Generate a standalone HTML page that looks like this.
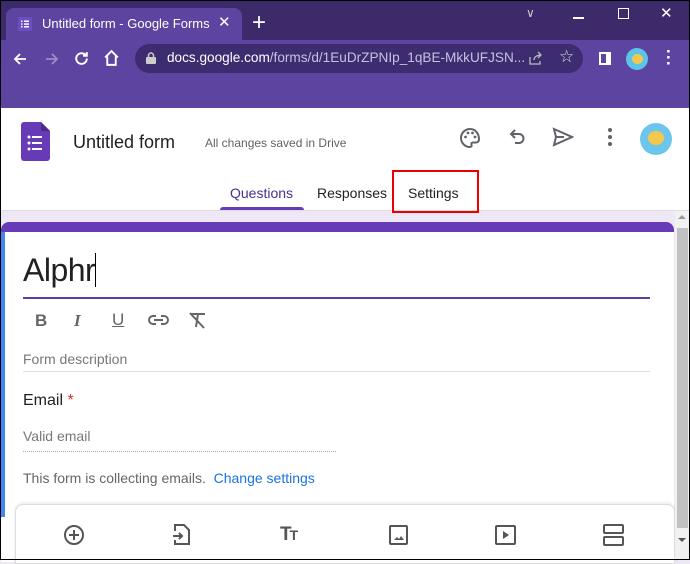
<!DOCTYPE html>
<html><head><meta charset="utf-8"><style>
*{margin:0;padding:0;box-sizing:border-box}
body{width:690px;height:560px;overflow:hidden;position:relative;font-family:"Liberation Sans",Arial,sans-serif;background:#ede7f6}
.abs{position:absolute}
svg{position:absolute}
</style></head><body>
<div class="abs" style="left:0;top:0;width:690px;height:40px;background:#3c2a6b"></div>
<div class="abs" style="left:6px;top:8px;width:236px;height:36px;background:#5c44a0;border-radius:8px 8px 0 0"></div>
<div class="abs" style="left:0;top:40px;width:690px;height:68px;background:#5c44a0"></div>
<svg style="left:18px;top:17px" width="14" height="14" viewBox="0 0 14 14"><rect width="14" height="14" fill="#6b4fc0"/><g fill="#fff"><rect x="3" y="3.5" width="1.5" height="1.5"/><rect x="6" y="3.5" width="5" height="1.5"/><rect x="3" y="6.3" width="1.5" height="1.5"/><rect x="6" y="6.3" width="5" height="1.5"/><rect x="3" y="9" width="1.5" height="1.5"/><rect x="6" y="9" width="5" height="1.5"/></g></svg>
<div class="abs" style="left:42px;top:16px;font-size:13px;color:#fff">Untitled form - Google Forms</div>
<div class="abs" style="left:218px;top:13px;font-size:15px;color:#fff">✕</div>
<div class="abs" style="left:252px;top:9px;font-size:24px;color:#fff;font-weight:300">+</div>
<div class="abs" style="left:526px;top:6px;font-size:12px;color:#ccc">∨</div>
<div class="abs" style="left:573px;top:17px;width:11px;height:1.5px;background:#fff"></div>
<div class="abs" style="left:618px;top:8px;width:11px;height:11px;border:1.5px solid #fff"></div>
<div class="abs" style="left:660px;top:4px;font-size:15px;color:#fff">✕</div>
<svg style="left:12px;top:51px" width="16" height="16" viewBox="0 0 16 16" fill="none" stroke="#fff" stroke-width="1.8"><path d="M14 8H3M8 3L3 8l5 5"/></svg>
<svg style="left:44px;top:51px" width="16" height="16" viewBox="0 0 16 16" fill="none" stroke="#9c8cc8" stroke-width="1.8"><path d="M2 8h11M8 3l5 5-5 5"/></svg>
<svg style="left:73px;top:50px" width="17" height="17" viewBox="0 0 16 16" fill="none" stroke="#fff" stroke-width="1.8"><path d="M13 8a5 5 0 1 1-1.5-3.5"/><path d="M13 2v3.5H9.5" fill="#fff"/></svg>
<svg style="left:103px;top:49px" width="17" height="18" viewBox="0 0 16 17" fill="none" stroke="#fff" stroke-width="1.8"><path d="M2 8l6-6 6 6M4 7v8h8V7"/></svg>
<div class="abs" style="left:135px;top:44px;width:448px;height:29px;background:#3d2c70;border-radius:15px"></div>
<svg style="left:146px;top:52px" width="10" height="12" viewBox="0 0 10 12"><rect x="0" y="5" width="10" height="7" rx="1" fill="#ccc"/><path d="M2.5 5V3.5a2.5 2.5 0 0 1 5 0V5" stroke="#ccc" stroke-width="1.5" fill="none"/></svg>
<div class="abs" style="left:167px;top:50px;font-size:13.6px;color:#fff;white-space:nowrap">docs.google.com<span style="color:#c8c0e0">/forms/d/1EuDrZPNIp_1qBE-MkkUFJSN...</span></div>
<svg style="left:528px;top:51px" width="15" height="15" viewBox="0 0 15 15" fill="none" stroke="#bbb" stroke-width="1.3"><path d="M2 6v7h10v-3M6 9c0-3 3-5 7-5M10 1l3 3-3 3"/></svg>
<div class="abs" style="left:559px;top:47px;font-size:17px;color:#ddd">☆</div>
<div class="abs" style="left:599px;top:52px;width:12px;height:13px;border:2px solid #fff;border-right-width:5px"></div>
<div class="abs" style="left:626px;top:48px;width:22px;height:22px;border-radius:50%;background:#5bc4e8"><div style="margin:6px;width:11px;height:10px;border-radius:50%;background:#f2c94c"></div></div>
<div class="abs" style="left:666px;top:49px;font-size:17px;color:#fff;font-weight:bold;line-height:6px">·<br>·<br>·</div>
<div class="abs" style="left:0;top:108px;width:690px;height:103px;background:#fff;border-bottom:1px solid #ddd"></div>
<svg style="left:21px;top:122px" width="29" height="39" viewBox="0 0 29 39"><path d="M3 0h17l9 9v27a3 3 0 0 1-3 3H3a3 3 0 0 1-3-3V3a3 3 0 0 1 3-3z" fill="#673ab7"/><path d="M20 0v9h9z" fill="#4a2a8a"/><g fill="#fff"><circle cx="8" cy="15" r="1.5"/><circle cx="8" cy="21" r="1.5"/><circle cx="8" cy="27" r="1.5"/><rect x="11" y="14" width="10" height="2"/><rect x="11" y="20" width="10" height="2"/><rect x="11" y="26" width="10" height="2"/></g></svg>
<div class="abs" style="left:73px;top:132px;font-size:18px;color:#202124">Untitled form</div>
<div class="abs" style="left:205px;top:136px;font-size:12px;color:#5f6368">All changes saved in Drive</div>
<svg style="left:459px;top:127px" width="22" height="22" viewBox="0 0 22 22" fill="none" stroke="#5f6368" stroke-width="2"><path d="M11 2a9 9 0 0 0 0 18c1.5 0 2-1 1.5-2s0-2.5 1.5-2.5H17a3 3 0 0 0 3-3C20 6 16 2 11 2z"/><g fill="#5f6368" stroke="none"><circle cx="6.5" cy="10" r="1.4"/><circle cx="9" cy="6" r="1.4"/><circle cx="13.5" cy="6" r="1.4"/><circle cx="16" cy="10" r="1.4"/></g></svg>
<svg style="left:507px;top:128px" width="20" height="20" viewBox="0 0 20 20" fill="none" stroke="#5f6368" stroke-width="2"><path d="M5 6h7a4.5 4.5 0 0 1 0 9H8M8 2L4 6l4 4"/></svg>
<svg style="left:552px;top:127px" width="22" height="20" viewBox="0 0 22 20" fill="none" stroke="#5f6368" stroke-width="2"><path d="M2 2l18 8-18 8 2-8zM4 10h8"/></svg>
<div class="abs" style="left:608px;top:128px"><div style="width:4px;height:4px;border-radius:50%;background:#5f6368;margin-bottom:3px"></div><div style="width:4px;height:4px;border-radius:50%;background:#5f6368;margin-bottom:3px"></div><div style="width:4px;height:4px;border-radius:50%;background:#5f6368"></div></div>
<div class="abs" style="left:640px;top:123px;width:32px;height:32px;border-radius:50%;background:#6cc6ec"><div style="margin:8px 8px;width:16px;height:14px;border-radius:50%;background:#f2c94c"></div></div>
<div class="abs" style="left:230px;top:185px;font-size:14px;color:#4a2f8f">Questions</div>
<div class="abs" style="left:220px;top:207px;width:84px;height:3px;background:#673ab7;border-radius:3px 3px 0 0"></div>
<div class="abs" style="left:317px;top:185px;font-size:14px;color:#202124">Responses</div>
<div class="abs" style="left:408px;top:185px;font-size:14px;color:#202124">Settings</div>
<div class="abs" style="left:392px;top:170px;width:87px;height:43px;border:2px solid #e00"></div>
<div class="abs" style="left:1px;top:222px;width:673px;height:340px;background:#fff;border-radius:8px 8px 0 0;overflow:hidden"><div style="height:10px;background:#673ab7"></div></div>
<div class="abs" style="left:1px;top:232px;width:4px;height:285px;background:#4285f4"></div>
<div class="abs" style="left:23px;top:252px;font-size:32px;color:#202124;letter-spacing:-.5px">Alphr<span style="display:inline-block;width:1px;height:34px;background:#000;vertical-align:-6px"></span></div>
<div class="abs" style="left:23px;top:297px;width:627px;height:2px;background:#5c3aa8"></div>
<div class="abs" style="left:35px;top:311px;font-size:17px;font-weight:bold;color:#666">B</div>
<div class="abs" style="left:74px;top:311px;font-size:17px;font-weight:bold;font-style:italic;color:#666;font-family:'Liberation Serif',serif">I</div>
<div class="abs" style="left:112px;top:310px;font-size:17px;color:#666;text-decoration:underline">U</div>
<svg style="left:148px;top:313px" width="21" height="14" viewBox="0 0 21 14" fill="none" stroke="#666" stroke-width="2"><path d="M8 3H5a4 4 0 0 0 0 8h3M13 3h3a4 4 0 0 1 0 8h-3M6 7h9"/></svg>
<svg style="left:188px;top:312px" width="20" height="17" viewBox="0 0 20 17" fill="none" stroke="#666" stroke-width="2"><path d="M3 2h14M10 2l-2 13M2 1l14 15"/></svg>
<div class="abs" style="left:23px;top:351px;font-size:14px;color:#777">Form description</div>
<div class="abs" style="left:23px;top:371px;width:627px;height:1px;background:#e0e0e0"></div>
<div class="abs" style="left:23px;top:392px;font-size:16px;color:#202124">Email <span style="color:#d93025">*</span></div>
<div class="abs" style="left:23px;top:428px;font-size:14px;color:#777">Valid email</div>
<div class="abs" style="left:23px;top:451px;width:313px;height:0;border-top:1px dotted #aaa"></div>
<div class="abs" style="left:23px;top:470px;font-size:14px;color:#666">This form is collecting emails.&nbsp; <span style="color:#1a73e8">Change settings</span></div>
<div class="abs" style="left:15px;top:504px;width:660px;height:60px;background:#fff;border:1px solid #ddd;border-radius:8px 8px 0 0;box-shadow:0 -1px 3px rgba(0,0,0,.1)"></div>
<svg style="left:63px;top:524px" width="22" height="22" viewBox="0 0 22 22" fill="none" stroke="#555" stroke-width="2"><circle cx="11" cy="11" r="9"/><path d="M11 6v10M6 11h10"/></svg>
<svg style="left:172px;top:523px" width="18" height="23" viewBox="0 0 18 23" fill="none" stroke="#555" stroke-width="2"><path d="M3 8V2h9l5 5v14H3v-4M1 13h9M7 10l3 3-3 3"/></svg>
<div class="abs" style="left:280px;top:524px;font-size:19px;font-weight:bold;color:#555;letter-spacing:-2px">T<span style="font-size:14px">T</span></div>
<svg style="left:389px;top:525px" width="19" height="20" viewBox="0 0 19 20" fill="none" stroke="#555" stroke-width="2"><rect x="1" y="1" width="17" height="18" rx="1"/><path d="M5 15l3-3 2 2 2-3 3 4z" fill="#555" stroke="none"/></svg>
<svg style="left:495px;top:525px" width="21" height="20" viewBox="0 0 21 20" fill="none" stroke="#555" stroke-width="2"><rect x="1" y="1" width="19" height="18" rx="1"/><path d="M8 6v8l6-4z" fill="#555" stroke="none"/></svg>
<svg style="left:603px;top:524px" width="21" height="22" viewBox="0 0 21 22" fill="none" stroke="#555" stroke-width="2"><rect x="1" y="1" width="19" height="8" rx="1"/><rect x="1" y="13" width="19" height="8" rx="1"/></svg>
<div class="abs" style="left:675px;top:211px;width:15px;height:349px;background:#f1f1f1"></div>
<div class="abs" style="left:677px;top:228px;width:11px;height:300px;background:#c1c1c1"></div>
<div class="abs" style="left:678px;top:215px;width:0;height:0;border-left:4px solid transparent;border-right:4px solid transparent;border-bottom:4px solid #999"></div>
<div class="abs" style="left:678px;top:538px;width:0;height:0;border-left:4px solid transparent;border-right:4px solid transparent;border-top:4px solid #555"></div>
<div class="abs" style="left:0;top:0;width:690px;height:560px;border:1px solid #000;pointer-events:none"></div>
</body></html>
